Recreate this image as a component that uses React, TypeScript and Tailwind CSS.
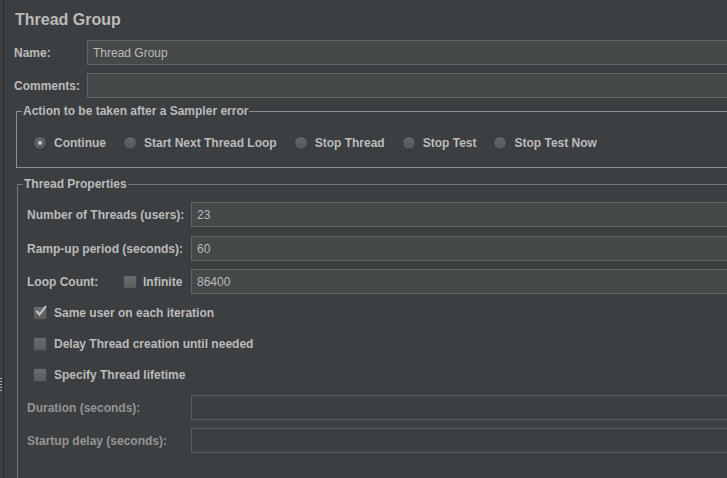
import React from 'react';

const font = "font-['Liberation_Sans',Arial,sans-serif]";

function Radio({ checked }: { checked?: boolean }) {
  return (
    <span className="flex h-[14px] w-[14px] shrink-0 items-center justify-center rounded-full border border-[#333537] bg-gradient-to-b from-[#64676a] to-[#54575a]">
      {checked && <span className="h-[4px] w-[4px] rounded-full bg-[#cacaca]" />}
    </span>
  );
}

function Checkbox({ checked }: { checked?: boolean }) {
  return (
    <span className="relative flex h-[14px] w-[14px] shrink-0 items-center justify-center rounded-[2px] border border-[#404244] bg-gradient-to-b from-[#6a6d70] to-[#5a5d60]">
      {checked && (
        <svg width="14" height="13" viewBox="0 0 14 13" className="absolute -top-[3px] left-[0px]">
          <path d="M2.5 7 L5.5 10.5 L12 2" fill="none" stroke="#c8c8c8" strokeWidth="2" />
        </svg>
      )}
    </span>
  );
}

function Field({ value, disabled }: { value?: string; disabled?: boolean }) {
  return (
    <div
      className={
        disabled
          ? 'flex h-[25px] flex-1 items-center border border-[#5b5e60] bg-[#3c3f41] px-[5px]'
          : 'flex h-[25px] flex-1 items-center border border-[#646464] bg-[#45494a] px-[5px] font-normal'
      }
    >
      {value}
    </div>
  );
}

const actions = ['Continue', 'Start Next Thread Loop', 'Stop Thread', 'Stop Test', 'Stop Test Now'];

export default function App() {
  return (
    <div className={`flex h-[478px] w-[727px] overflow-hidden bg-[#3c3f41] text-[12px] font-bold leading-[14px] text-[#bbbbbb] ${font}`}>
      {/* splitter handle */}
      <div className="flex w-[3px] shrink-0 flex-col gap-[2px] pt-[378px]">
        <span className="h-px w-[2px] bg-[#b0b0b0]" />
        <span className="h-px w-[2px] bg-[#b0b0b0]" />
        <span className="h-px w-[2px] bg-[#b0b0b0]" />
        <span className="h-px w-[2px] bg-[#b0b0b0]" />
        <span className="h-px w-[2px] bg-[#b0b0b0]" />
      </div>

      <div className="flex w-[780px] shrink-0 flex-col border-l border-[#2b2b2b]">
        <div className="pl-[11px] pt-[10px] text-[16px] leading-[20px]">Thread Group</div>

        <div className="mt-[10px] flex h-[25px] items-center pl-[10px]">
          <div className="w-[73px] shrink-0">Name:</div>
          <Field value="Thread Group" />
        </div>
        <div className="mt-[8px] flex h-[25px] items-center pl-[10px]">
          <div className="w-[73px] shrink-0">Comments:</div>
          <Field />
        </div>

        <fieldset className="ml-[12px] mt-[6px] border border-[#8e9193] px-0 pb-[16px] pt-[17px]">
          <legend className="ml-[5px] px-[1px]">Action to be taken after a Sampler error</legend>
          <div className="flex h-[16px] items-center gap-[17px] pl-[16px]">
            {actions.map((a, i) => (
              <div key={a} className="flex items-center gap-[7px]">
                <Radio checked={i === 0} />
                <span>{a}</span>
              </div>
            ))}
          </div>
        </fieldset>

        <fieldset className="ml-[13px] mt-[9px] flex-1 border border-b-0 border-[#75787a] px-0 pt-[11px]">
          <legend className="ml-[5px] px-[1px]">Thread Properties</legend>

          <div className="flex h-[25px] items-center pl-[9px]">
            <div className="w-[164px] shrink-0">Number of Threads (users):</div>
            <Field value="23" />
          </div>
          <div className="mt-[9px] flex h-[25px] items-center pl-[9px]">
            <div className="w-[164px] shrink-0">Ramp-up period (seconds):</div>
            <Field value="60" />
          </div>
          <div className="mt-[8px] flex h-[25px] items-center pl-[9px]">
            <div className="flex w-[164px] shrink-0 items-center">
              <span className="w-[96px] shrink-0">Loop Count:</span>
              <Checkbox />
              <span className="ml-[6px]">Infinite</span>
            </div>
            <Field value="86400" />
          </div>

          <div className="mt-[11px] flex h-[16px] items-center gap-[7px] pl-[15px]">
            <Checkbox checked />
            <span>Same user on each iteration</span>
          </div>
          <div className="mt-[15px] flex h-[16px] items-center gap-[7px] pl-[15px]">
            <Checkbox />
            <span>Delay Thread creation until needed</span>
          </div>
          <div className="mt-[15px] flex h-[16px] items-center gap-[7px] pl-[15px]">
            <Checkbox />
            <span>Specify Thread lifetime</span>
          </div>

          <div className="mt-[12px] flex h-[25px] items-center pl-[9px] text-[#949494]">
            <div className="w-[164px] shrink-0">Duration (seconds):</div>
            <Field disabled />
          </div>
          <div className="mt-[8px] flex h-[25px] items-center pl-[9px] text-[#949494]">
            <div className="w-[164px] shrink-0">Startup delay (seconds):</div>
            <Field disabled />
          </div>
        </fieldset>
      </div>
    </div>
  );
}
